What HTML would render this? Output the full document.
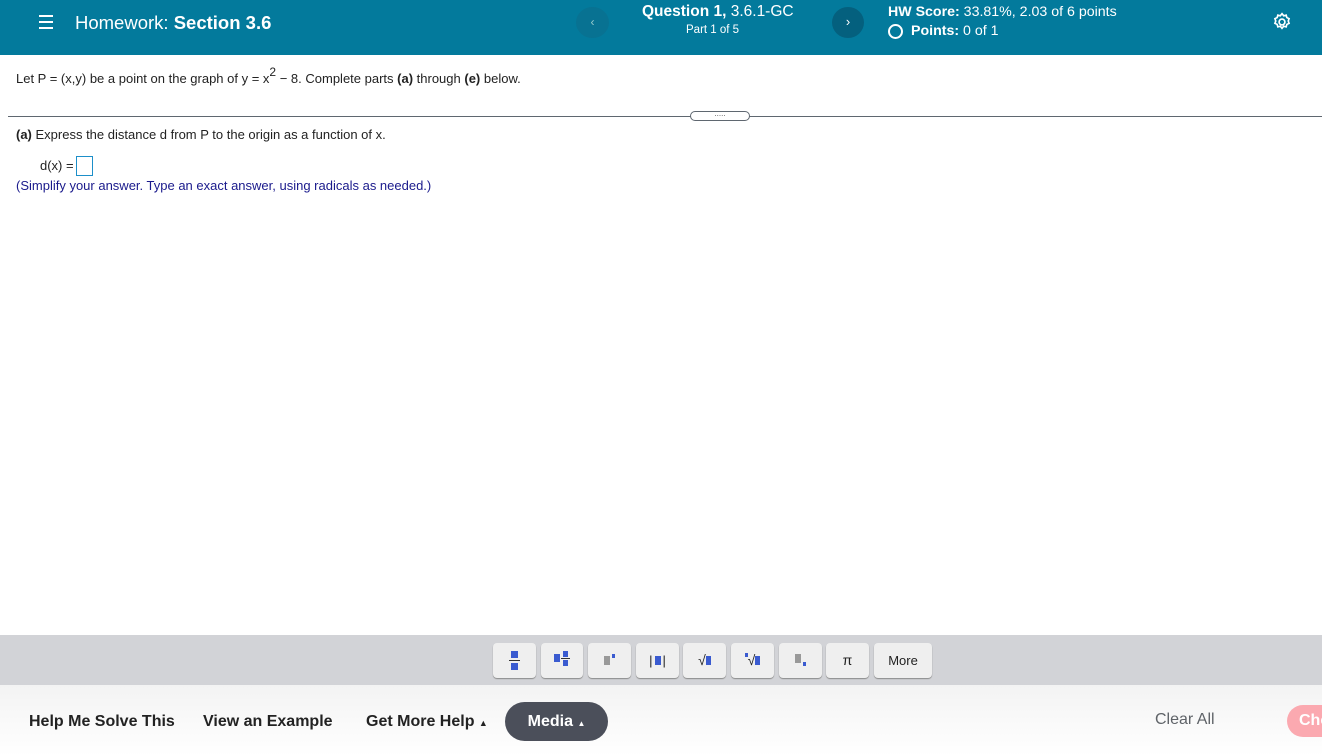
<!DOCTYPE html>
<html><head><meta charset="utf-8"><style>
*{margin:0;padding:0;box-sizing:border-box}
body{width:1322px;height:756px;overflow:hidden;font-family:"Liberation Sans",Arial,sans-serif;background:#fff;position:relative;color:#222}
.hdr{position:absolute;left:0;top:0;width:1322px;height:55px;background:#037a9c;color:#fff}
.a{position:absolute;white-space:nowrap}
.tb{position:absolute;left:0;top:635px;width:1322px;height:50px;background:#d2d3d7}
.btn{position:absolute;top:643px;height:35px;background:#efefef;border-radius:4px;box-shadow:0 1px 1px #8a8a8a;}
.bot{position:absolute;left:0;top:685px;width:1322px;height:71px;background:linear-gradient(#f3f3f3,#fff)}
.bl{background:#3a5bd0;position:absolute}
.gr{background:#999;position:absolute}
</style></head><body>
<div class="hdr">
 <div class="a" style="left:39px;top:15px;width:14px;height:2px;background:#fff;box-shadow:0 6px 0 #fff,0 12px 0 #fff"></div>
 <div class="a" style="left:75px;top:12px;font-size:18.5px">Homework: <b>Section 3.6</b></div>
 <div class="a" style="left:576px;top:7px;width:33px;height:31px;border-radius:50%;background:#087292;text-align:center;line-height:30px;font-size:12px;color:#9cc">&#8249;</div>
 <div class="a" style="left:642px;top:3px;font-size:15.5px"><b>Question 1,</b> 3.6.1-GC</div>
 <div class="a" style="left:686px;top:24px;font-size:11.5px">Part 1 of 5</div>
 <div class="a" style="left:832px;top:7px;width:32px;height:31px;border-radius:50%;background:#04607e;text-align:center;line-height:30px;font-size:13px">&#8250;</div>
 <div class="a" style="left:888px;top:4px;font-size:14.2px"><b>HW Score:</b> 33.81%, 2.03 of 6 points</div>
 <div class="a" style="left:888px;top:24px;width:15px;height:15px;border:2px solid #fff;border-radius:50%"></div>
 <div class="a" style="left:911px;top:23px;font-size:14.2px"><b>Points:</b> 0 of 1</div>
 <svg class="a" style="left:1272px;top:12px" width="20" height="20" viewBox="0 0 24 24" fill="none" stroke="#fff" stroke-width="2"><circle cx="12" cy="12" r="3.5"/><path d="M12 2l2 2.5 3-.8.8 3 2.7 1.3-1 2.8 1 2.8-2.7 1.3-.8 3-3-.8-2 2.5-2-2.5-3 .8-.8-3-2.7-1.3 1-2.8-1-2.8 2.7-1.3.8-3 3 .8z"/></svg>
</div>
<div class="a" style="left:16px;top:71px;font-size:13px">Let P = (x,y) be a point on the graph of y = x<sup style="font-size:12px;position:relative;top:-2px;vertical-align:super;line-height:0">2</sup> &#8722; 8. Complete parts <b>(a)</b> through <b>(e)</b> below.</div>
<div class="a" style="left:8px;top:116px;width:1314px;height:1px;background:#5f6770"></div>
<div class="a" style="left:690px;top:111px;width:60px;height:10px;border:1px solid #5f6770;border-radius:5px;background:#fff;font-size:8px;line-height:4px;text-align:center;color:#555">.....</div>
<div class="a" style="left:16px;top:127px;font-size:13px"><b>(a)</b> Express the distance d from P to the origin as a function of x.</div>
<div class="a" style="left:40px;top:158px;font-size:13px">d(x) =</div>
<div class="a" style="left:76px;top:156px;width:17px;height:20px;border:1.5px solid #1d8fc9;background:#fff"></div>
<div class="a" style="left:16px;top:178px;font-size:13px;color:#1a1a8c">(Simplify your answer. Type an exact answer, using radicals as needed.)</div>
<div class="tb"></div>
<div class="btn" style="left:493px;width:43px"><div class="bl" style="left:18px;top:8px;width:7px;height:7px"></div><div style="position:absolute;left:16px;top:17px;width:11px;height:1px;background:#333"></div><div class="bl" style="left:18px;top:20px;width:7px;height:7px"></div></div>
<div class="btn" style="left:541px;width:42px"><div class="bl" style="left:13px;top:11px;width:6px;height:8px"></div><div class="bl" style="left:22px;top:8px;width:5px;height:6px"></div><div style="position:absolute;left:20px;top:15px;width:9px;height:1px;background:#333"></div><div class="bl" style="left:22px;top:17px;width:5px;height:6px"></div></div>
<div class="btn" style="left:588px;width:43px"><div class="gr" style="left:16px;top:13px;width:6px;height:9px"></div><div class="bl" style="left:24px;top:11px;width:3px;height:4px"></div></div>
<div class="btn" style="left:636px;width:43px;font-size:13px;text-align:center;line-height:35px">|<span style="display:inline-block;width:6px;height:9px;background:#3a5bd0;margin:0 2px"></span>|</div>
<div class="btn" style="left:683px;width:43px;font-size:14px;text-align:center;line-height:35px">&#8730;<span style="display:inline-block;width:5px;height:9px;background:#3a5bd0"></span></div>
<div class="btn" style="left:731px;width:43px;font-size:14px;text-align:center;line-height:35px"><span style="display:inline-block;width:3px;height:4px;background:#3a5bd0;vertical-align:8px"></span>&#8730;<span style="display:inline-block;width:5px;height:9px;background:#3a5bd0"></span></div>
<div class="btn" style="left:779px;width:43px"><div class="gr" style="left:16px;top:11px;width:6px;height:9px"></div><div class="bl" style="left:24px;top:19px;width:3px;height:4px"></div></div>
<div class="btn" style="left:826px;width:43px;font-size:14px;text-align:center;line-height:35px">&#960;</div>
<div class="btn" style="left:874px;width:58px;font-size:13px;text-align:center;line-height:35px">More</div>
<div class="bot"></div>
<div class="a" style="left:29px;top:713px;font-size:16px;font-weight:bold">Help Me Solve This</div>
<div class="a" style="left:203px;top:713px;font-size:16px;font-weight:bold">View an Example</div>
<div class="a" style="left:366px;top:713px;font-size:16px;font-weight:bold">Get More Help <span style="font-size:9px">&#9650;</span></div>
<div class="a" style="left:505px;top:702px;width:103px;height:39px;border-radius:20px;background:#4b4f5a;color:#fff;font-size:16px;font-weight:bold;text-align:center;line-height:39px">Media <span style="font-size:8px">&#9650;</span></div>
<div class="a" style="left:1155px;top:711px;font-size:16px;color:#5f6368">Clear All</div>
<div class="a" style="left:1287px;top:705px;width:80px;height:32px;border-radius:16px;background:#fba9b0;color:#fff;font-size:16px;font-weight:bold;line-height:32px;padding-left:12px">Check</div>
</body></html>
